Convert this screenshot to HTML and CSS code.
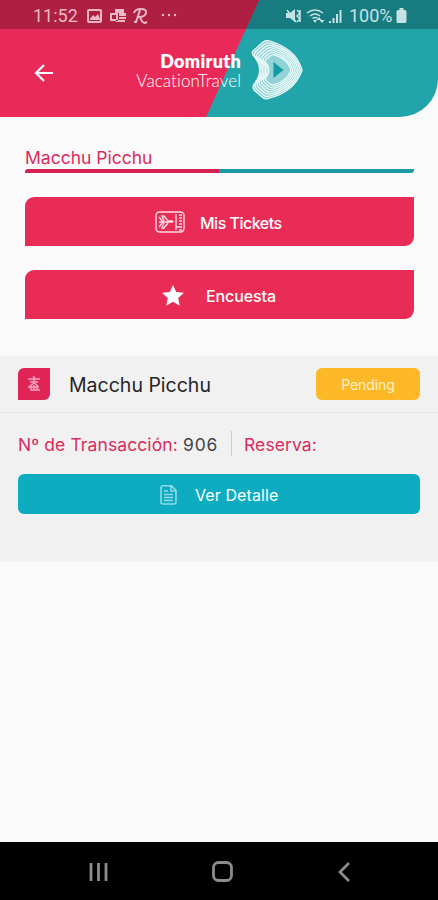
FILE: index.html
```html
<!DOCTYPE html>
<html lang="es">
<head>
  <meta charset="UTF-8" />
  <meta name="viewport" content="width=device-width, initial-scale=1.0"/>
  <title>Domiruth Vacation Travel</title>
  <link rel="stylesheet" href="styles.css">
</head>
<body>
  <header class="header">
    <div class="status-bar">
      <span class="clock">11:52</span>
      <svg class="status-left" width="94" height="18" viewBox="0 0 94 18">
        <path fill-rule="evenodd" d="M3 2h11q2 0 2 2v10q0 2-2 2H3q-2 0-2-2V4q0-2 2-2zm0 2v10h11V4zM4 12l3-4 2 2 3-3 2 5v1H4z"/>
        <path fill-rule="evenodd" d="M24 6h8v8h-8zm2 2v4h4V8zM29 2h9v4h-9zM33 6h7v3h-7zM33 10h7v2h-7zM30 13h9v2h-9z"/>
        <path class="line" d="M48 6q1-4 7-4t5 4-7 4h-2M54 3l-4 12h-2M54 10q2 6 5 6l2-1"/>
        <circle cx="77" cy="8" r="1.200"/><circle cx="83" cy="8" r="1.200"/><circle cx="89" cy="8" r="1.200"/>
      </svg>
      <svg class="status-right" width="58" height="18" viewBox="0 0 58 18">
        <path d="M0 6h4l5-4v13l-5-4H0z"/>
        <path class="line" d="M1 3l9 12M11 3l3 3-3 3 3 3-3 3M14 3v12"/>
        <path class="line" d="M21 6q8-6 16 0M24 9q5-4 10 0M26.500 11.500q2.500-2 5 0"/>
        <path d="M27 13h4l-2 3zM33 10l2.500 3h-5zM36 16l-2.500-3h5z"/>
        <path d="M43 14h2v2h-2zM46.500 11h2v5h-2zM50 7h2v9h-2zM53.500 3h2v13h-2z"/>
      </svg>
      <span class="battery-text">100%</span>
      <svg class="battery" width="11" height="16" viewBox="0 0 11 16">
        <path d="M3.500 0h4v2H9q1.500 0 1.500 1.500v10Q10.500 15 9 15H2Q.5 15 .5 13.500v-10Q.5 2 2 2h1.500z"/>
      </svg>
    </div>
    <div class="app-bar">
      <svg class="back" width="20" height="20" viewBox="0 0 20 20">
        <path d="M10 2L2 10l8 8M2 10h17"/>
      </svg>
      <div class="brand">
        <strong>Domiruth</strong>
        <span>VacationTravel</span>
      </div>
      <svg class="logo" width="53" height="60" viewBox="0 0 53 60">
        <defs>
          <path id="ring" d="M2 15Q0 12 3 10L12 2Q15 0 19 1Q44 9 50 27Q52 30 50 33Q42 52 19 58Q14 60 11 57L3 50Q1 47 3 44Q7 39 8 35Q9 30 8 25Q7 21 2 15Z" vector-effect="non-scaling-stroke"/>
        </defs>
        <use class="logo-fill" href="#ring"/>
        <use href="#ring" transform="translate(2.240 2.400) scale(.92)"/>
        <use href="#ring" transform="translate(4.480 4.800) scale(.84)"/>
        <use href="#ring" transform="translate(6.720 7.200) scale(.76)"/>
        <use href="#ring" transform="translate(8.960 9.600) scale(.68)"/>
        <use href="#ring" transform="translate(11.200 12) scale(.6)"/>
        <use href="#ring" transform="translate(13.440 14.400) scale(.52)"/>
        <path class="play" d="M22.500 22v16L32.500 30z"/>
      </svg>
    </div>
  </header>

  <main>
    <section class="trip">
      <h1>Macchu Picchu</h1>
      <div class="underline"></div>
      <button class="btn tickets">
        <svg width="30" height="23" viewBox="0 0 30 23">
          <rect x="1" y="1" width="28" height="20" rx="3.500"/>
          <path d="M21 3v16M4 6l4 5-4 5M4 11h13q2 0 0-1h-4L9 5H7l2 5M13 12l-4 5H7l2-5M24 4h3M24 7h3M24 10h3M24 13h3M21 16h6M24 19h3"/>
        </svg>
        <span>Mis Tickets</span>
      </button>
      <button class="btn survey">
        <svg width="22" height="21" viewBox="0 0 22 21">
          <path d="M11 0l3.200 7 7.800.8-5.800 5.200 1.600 7.700-6.800-3.900-6.800 3.900L5.800 13 0 7.800 7.800 7z"/>
        </svg>
        <span>Encuesta</span>
      </button>
    </section>

    <section class="booking">
      <div class="booking-head">
        <div class="badge">
          <svg width="16" height="18" viewBox="0 0 16 18">
            <path d="M7 1l2 2M2 4h12M4 7h8M8 3v5l-5 4M8 8l4 3M2 12h11M5 10v5h6v-5M8 10v5M9 15h5"/>
          </svg>
        </div>
        <h2>Macchu Picchu</h2>
        <span class="pending">Pending</span>
      </div>
      <div class="booking-body">
        <div class="info">
          <span class="label transaction">Nº de Transacción:</span>
          <span class="number">906</span>
          <span class="label reserve">Reserva:</span>
        </div>
        <button class="detail">
          <svg width="17" height="20" viewBox="0 0 17 20">
            <path d="M3 .8h8.500L16 5.500V17q0 2-2 2H3q-2 0-2-2V3Q1 .8 3 .8zM11 1v5h5M4 6h4M4 9.500h9M4 12.500h9M4 15.500h9"/>
          </svg>
          <span>Ver Detalle</span>
        </button>
      </div>
    </section>
  </main>

  <nav class="nav-bar">
    <svg width="20" height="20" viewBox="0 0 20 20"><path d="M2 1v18M9.500 1v18M17 1v18"/></svg>
    <svg width="22" height="22" viewBox="0 0 22 22"><rect x="1.500" y="1.500" width="18" height="18" rx="5"/></svg>
    <svg width="14" height="20" viewBox="0 0 14 20"><path d="M12 1L3 10l9 9"/></svg>
  </nav>
</body>
</html>
```

FILE: styles.css
```css
* {
  box-sizing: border-box;
}

body {
  margin: 0;
  height: 900px;
  display: flex;
  flex-direction: column;
  background-color: #fafafa;
  font-family: Inter, sans-serif;
  overflow: hidden;
}

svg {
  flex: none;
  display: block;
}

.header {
  height: 117px;
  background: linear-gradient(114.4deg, #e92a58 52.7%, #21a5ab 52.85%);
  border-bottom-right-radius: 38px;
  overflow: hidden;
}

.status-bar {
  height: 29px;
  padding: 2px 31px 0 33px;
  display: flex;
  align-items: center;
  background-color: rgba(0, 0, 0, 0.25);
  font-family: Roboto, sans-serif;
  font-size: 18px;
}

.clock {
  width: 53px;
  color: #edb8c6;
}

.status-left {
  fill: #edb8c6;
}

.status-right {
  margin-left: auto;
  margin-right: 5px;
}

.status-right, .battery {
  fill: #c5e2e4;
}

.status-bar .line {
  fill: none;
  stroke: #edb8c6;
  stroke-width: 2;
}

.status-right .line {
  stroke: #c5e2e4;
  stroke-width: 1.5;
}

.battery-text {
  color: #c5e2e4;
  width: 47px;
  white-space: nowrap;
}

.app-bar {
  height: 88px;
  padding: 11px 0 0 34px;
  display: flex;
}

.back {
  margin-top: 23px;
  fill: none;
  stroke: #fff;
  stroke-width: 2.2;
}

.brand {
  width: 187px;
  padding-top: 10px;
  display: flex;
  flex-direction: column;
  align-items: flex-end;
  color: #fff;
  font-family: Lato, sans-serif;
}

.brand strong {
  font-size: 18px;
  line-height: 22px;
  font-weight: 800;
  letter-spacing: 0.3px;
}

.brand span {
  font-size: 17px;
  line-height: 18px;
  font-weight: 300;
  letter-spacing: 0.1px;
}

.logo {
  margin-left: 10px;
  fill: none;
  stroke: #f0fafa;
  stroke-width: 1.2;
}

.logo-fill {
  fill: rgba(255, 255, 255, 0.5);
}

.logo .play {
  fill: #129aa2;
  stroke: none;
}

.trip {
  height: 239px;
  padding: 28px 24px 0 25px;
}

h1 {
  margin: 0;
  height: 24px;
  color: #d92b5f;
  font-size: 17.5px;
  line-height: 25px;
  font-weight: 400;
}

.underline {
  height: 4px;
  border-radius: 3px 0 3px 0;
  background: linear-gradient(to right, #d42052 50%, #1b9ca3 50%);
}

button {
  border: none;
  padding: 0;
  width: 100%;
  display: flex;
  align-items: center;
  color: #fff;
  font-family: inherit;
  font-size: 16px;
}

.btn {
  height: 49px;
  margin-top: 24px;
  background-color: #e82c56;
  border-radius: 9px 0 9px 0;
  font-weight: 500;
}

.tickets {
  padding: 2px 0 0 130px;
  gap: 15px;
  letter-spacing: -0.5px;
}

.tickets svg {
  fill: none;
  stroke: #ffdce5;
  stroke-width: 1.4;
}

.survey {
  padding: 2px 0 0 137px;
  gap: 22px;
  letter-spacing: -0.1px;
}

.survey svg {
  fill: #fff;
}

.booking {
  height: 206px;
  background-color: #f1f1f1;
}

.booking-head {
  height: 57px;
  padding: 0 18px;
  display: flex;
  align-items: center;
  border-bottom: 1px solid #e5e5e7;
}

.badge {
  width: 32px;
  height: 32px;
  display: flex;
  align-items: center;
  justify-content: center;
  background-color: #e02456;
  border-radius: 6px 0 6px 0;
}

.badge svg {
  fill: none;
  stroke: #f8a5ba;
  stroke-width: 1.4;
}

h2 {
  margin: 1px 0 0 19px;
  color: #252527;
  font-size: 19.5px;
  font-weight: 400;
}

.pending {
  width: 104px;
  height: 32px;
  margin-left: auto;
  background-color: #fdb827;
  border-radius: 6px;
  color: #fff1c8;
  font-size: 14px;
  line-height: 33px;
  letter-spacing: -0.1px;
  text-align: center;
}

.booking-body {
  padding: 18px 18px 0;
}

.info {
  height: 25px;
  display: flex;
  align-items: center;
  color: #444;
  font-size: 17.5px;
}

.label {
  color: #d92b5f;
  height: 25px;
  line-height: 27px;
  letter-spacing: 0.1px;
}

.transaction {
  width: 165px;
  white-space: nowrap;
}

.number {
  width: 49px;
  height: 25px;
  line-height: 27px;
  letter-spacing: 0.8px;
  border-right: 1px solid #ccc;
}

.reserve {
  margin-left: 12px;
}

.detail {
  height: 40px;
  margin-top: 18px;
  padding: 2px 0 0 142px;
  gap: 18px;
  letter-spacing: 0.1px;
  background-color: #0dacc1;
  border-radius: 6px;
}

.detail svg {
  fill: none;
  stroke: #91d9e3;
  stroke-width: 1.6;
}

.nav-bar {
  height: 58px;
  margin-top: auto;
  padding: 2px 87px 0 89px;
  display: flex;
  align-items: center;
  justify-content: space-between;
  background-color: #000;
}

.nav-bar svg {
  fill: none;
  stroke: #8c8c8c;
  stroke-width: 2.8;
}
```
